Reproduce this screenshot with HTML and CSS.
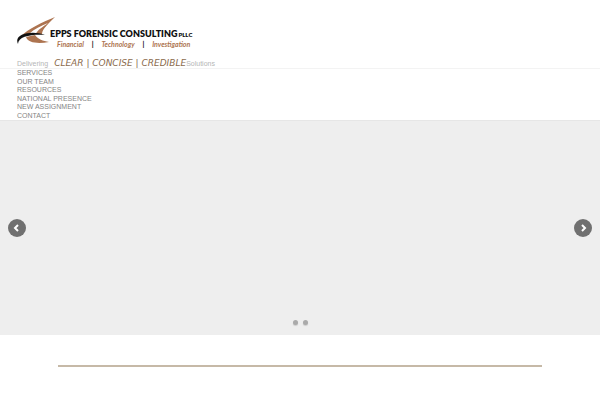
FILE: index.html
```html
<!DOCTYPE html>
<html lang="en">
<head>
<meta charset="utf-8">
<title>Epps Forensic Consulting PLLC</title>
<link rel="stylesheet" href="styles.css">
</head>
<body>
<header class="header">
  <div class="top">
    <a class="logo" href="#">
      <svg class="mark" viewBox="0 0 42 32" aria-hidden="true">
        <path fill="#ad7450" d="M39 1C27 6 12 13 5 20L14 18L21 18L26 18C26 13 33 7 39 1Z"/>
        <path fill="#fff" d="M13 18C18 13 25 10 32 7C27 11 21 14 20 18Z"/>
        <path fill="#ad7450" d="M10 21C12 27 22 28 33 26C27 25 22 23 19 19Z"/>
        <path fill="#111" d="M2 28C-3 18 16 14 29 19C17 18 2 20 2 28Z"/>
      </svg>
      <span class="words">
        <span class="name">EPPS FORENSIC CONSULTING<small class="suffix">PLLC</small></span>
        <span class="fields"><span>Financial</span><b class="bar">|</b><span>Technology</span><b class="bar">|</b><span>Investigation</span></span>
      </span>
    </a>
    <p class="tagline"><span>Delivering</span><em class="motto">CLEAR | CONCISE | CREDIBLE</em><span>Solutions</span></p>
  </div>
  <nav>
    <ul class="menu">
      <li><a href="#">SERVICES</a></li>
      <li><a href="#">OUR TEAM</a></li>
      <li><a href="#">RESOURCES</a></li>
      <li><a href="#">NATIONAL PRESENCE</a></li>
      <li><a href="#">NEW ASSIGNMENT</a></li>
      <li><a href="#">CONTACT</a></li>
    </ul>
  </nav>
</header>
<main>
  <section class="slider" aria-label="Slideshow">
    <button class="arrow" aria-label="Previous"><svg class="chevron" viewBox="0 0 8 8"><path d="M5 1L2 4L5 7"/></svg></button>
    <div class="dots"><button class="dot" aria-label="Slide 1"></button><button class="dot" aria-label="Slide 2"></button></div>
    <button class="arrow" aria-label="Next"><svg class="chevron" viewBox="0 0 8 8"><path d="M3 1L6 4L3 7"/></svg></button>
  </section>
  <hr class="rule">
</main>
</body>
</html>
```
FILE: styles.css
```css
body {
  margin: 0;
  background: #fff;
  font-family: "Liberation Sans", Arial, sans-serif;
  font-size: 7px;
  color: #858585;
}
a { color: inherit; text-decoration: none; }
.top {
  padding: 16px 16px 0;
  border-bottom: 1px solid #f3f3f3;
}
.logo { display: flex; width: max-content; }
.mark { width: 42px; height: 32px; }
.words {
  display: flex;
  flex-direction: column;
  margin-left: -8px;
  padding-top: 12px;
  font-family: Lato, sans-serif;
  color: #111;
}
.name { font-size: 9px; line-height: 12px; font-weight: 800; white-space: nowrap; }
.suffix { margin-left: 1px; font-size: 6px; }
.fields {
  display: flex;
  justify-content: space-between;
  padding: 0 2px 0 7px;
  font-size: 7px;
  line-height: 7px;
  font-style: italic;
  font-weight: 700;
  color: #ad7450;
}
.bar { color: #111; font-style: normal; }
.tagline {
  display: flex;
  align-items: baseline;
  margin: 11px 0 0 1px;
  line-height: 8px;
  color: #b5b5b5;
}
.motto {
  margin-left: 6px;
  font-family: "DejaVu Sans", sans-serif;
  font-size: 9px;
  color: #8b6b4d;
}
.menu {
  display: grid;
  grid-auto-rows: 1fr;
  min-height: 51px;
  margin: 0;
  padding: 0 17px;
  line-height: 8px;
  list-style: none;
}
.slider {
  display: grid;
  grid-template-columns: 18px 1fr 18px;
  align-items: center;
  box-sizing: border-box;
  min-height: 215px;
  padding: 0 8px;
  background: #eee;
  border-top: 1px solid #e6e6e6;
}
.arrow {
  display: grid;
  place-items: center;
  width: 18px;
  height: 18px;
  padding: 0;
  border: 0;
  border-radius: 50%;
  background: #707070;
}
.chevron { width: 8px; height: 8px; fill: none; stroke: #fff; stroke-width: 2; }
.dots {
  display: flex;
  align-self: end;
  justify-content: center;
  gap: 5px;
  padding-bottom: 10px;
}
.dot {
  width: 5px;
  height: 5px;
  padding: 0;
  border: 0;
  border-radius: 50%;
  background: #aaa;
  box-shadow: 0 1px 1px #ccc;
}
.rule {
  margin: 30px 58px 0;
  border: 0;
  border-top: 2px solid #c6b9a7;
}
```
